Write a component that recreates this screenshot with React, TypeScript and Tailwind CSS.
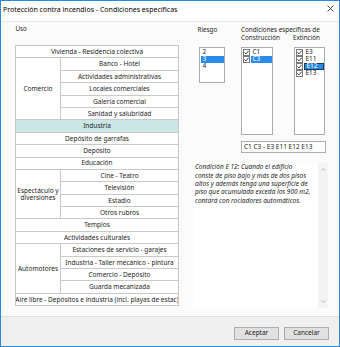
import type { ReactNode } from "react";

type Group = { group: ReactNode; items: string[] };

const usos: (string | Group)[] = [
  "Vivienda - Residencia colectiva",
  {
    group: "Comercio",
    items: [
      "Banco - Hotel",
      "Actividades administrativas",
      "Locales comerciales",
      "Galería comercial",
      "Sanidad y salubridad",
    ],
  },
  "Industria",
  "Depósito de garrafas",
  "Depósito",
  "Educación",
  {
    group: (
      <>
        Espectáculo y
        <br />
        diversiones
      </>
    ),
    items: ["Cine - Teatro", "Televisión", "Estadio", "Otros rubros"],
  },
  "Templos",
  "Actividades culturales",
  {
    group: "Automotores",
    items: [
      "Estaciones de servicio - garajes",
      "Industria - Taller mecánico - pintura",
      "Comercio - Depósito",
      "Guarda mecanizada",
    ],
  },
  "Aire libre - Depósitos e industria (incl. playas de estac)",
];

const rowSpan: Record<number, string> = { 4: "row-span-4", 5: "row-span-5" };

const cell =
  "flex items-center justify-center overflow-hidden whitespace-nowrap border-r border-b border-[#c9c9c9] pt-[1px] leading-none";

function UsoTable() {
  return (
    <div className="grid w-[164px] auto-rows-[12.4px] grid-cols-[45px_118px] border-t border-l border-[#c9c9c9] bg-white text-[6.5px] text-[#1e1e1e]">
      {usos.map((u, i) =>
        typeof u === "string" ? (
          <div
            key={i}
            className={`${cell} col-span-2 ${u === "Industria" ? "bg-[#cbe6e7]" : ""}`}
          >
            {u}
          </div>
        ) : (
          [
            <div
              key={`g${i}`}
              className={`${cell} ${rowSpan[u.items.length]} text-center leading-[8px] whitespace-normal`}
            >
              <span>{u.group}</span>
            </div>,
            ...u.items.map((it) => (
              <div key={it} className={cell}>
                {it}
              </div>
            )),
          ]
        ),
      )}
    </div>
  );
}

function Check() {
  return (
    <svg width="7" height="7" viewBox="0 0 7 7" className="shrink-0">
      <rect x="0.5" y="0.5" width="6" height="6" fill="#fff" stroke="#7a7a7a" />
      <path d="M1.4 3.4 L2.9 4.9 L5.6 1.8" fill="none" stroke="#222" strokeWidth="0.9" />
    </svg>
  );
}

function CheckItem({ label, sel, focus }: { label: string; sel?: boolean; focus?: boolean }) {
  return (
    <div className="flex h-[7px] items-center pl-[1px]">
      <Check />
      <span
        className={`ml-[1px] flex h-[7px] flex-1 items-center pl-[1.5px] leading-none ${
          sel ? "bg-[#2a8ce8] text-white" : ""
        } ${focus ? "border border-[#1d3a5c]" : ""}`}
      >
        {label}
      </span>
    </div>
  );
}

function Description() {
  return (
    <div className="mt-[10px] flex h-[145px] w-[135px] bg-white">
      <div className="flex-1 px-[2px] pt-[0.5px] text-[6.5px] leading-[8.4px] italic text-[#1e1e1e]">
        <div>Condición E 12: Cuando el edificio</div>
        <div>conste de piso bajo y más de dos pisos</div>
        <div>altos y además tenga una superficie de</div>
        <div>piso que acumulada exceda los 900 m2,</div>
        <div>contará con rociadores automáticos.</div>
      </div>
      <div className="flex w-[10px] flex-col items-center justify-between bg-[#f4f4f4] py-[5px]">
        <svg width="5" height="3" viewBox="0 0 5 3">
          <path d="M0.5 2.6 L2.5 0.6 L4.5 2.6" fill="none" stroke="#a6a6a6" strokeWidth="0.8" />
        </svg>
        <svg width="5" height="3" viewBox="0 0 5 3">
          <path d="M0.5 0.4 L2.5 2.4 L4.5 0.4" fill="none" stroke="#a6a6a6" strokeWidth="0.8" />
        </svg>
      </div>
    </div>
  );
}

function Button({ children }: { children: ReactNode }) {
  return (
    <button className="flex h-[13px] w-[45px] items-center justify-center border border-[#adadad] bg-[#e1e1e1] text-[6.5px] leading-none text-[#1e1e1e]">
      {children}
    </button>
  );
}

export default function App() {
  return (
    <div className="flex h-[347px] w-[340px] flex-col border border-[#2b88d8] bg-white font-['Noto_Sans',sans-serif] text-[#1e1e1e]">
      {/* title bar */}
      <div className="flex h-[21px] shrink-0 items-start justify-between border-b border-[#e6e6e6] bg-white pl-[2px] pt-[3px]">
        <span className="text-[7px] leading-[11px] text-black">
          Protección contra incendios - Condiciones específicas
        </span>
        <svg width="7" height="7" viewBox="0 0 7 7" className="mt-[1px] mr-[5px]">
          <path d="M0.5 0.5 L6.5 6.5 M6.5 0.5 L0.5 6.5" stroke="#222" strokeWidth="0.8" />
        </svg>
      </div>

      {/* body */}
      <div className="flex h-[294px] shrink-0 bg-[#fbfbfb] pl-[14px]">
        <div className="flex flex-col pt-[3px]">
          <span className="pl-[0.5px] text-[6.3px] leading-[8px]">Uso</span>
          <div className="mt-[12px]">
            <UsoTable />
          </div>
        </div>

        <div className="ml-[14px] flex w-[135px] flex-col pt-[3.75px] text-[6.3px]">
          <div className="flex items-start">
            <div className="flex w-[48px] flex-col">
              <span className="pl-[4.5px] leading-[8.5px]">Riesgo</span>
              <div className="mt-[12.5px] ml-[6px] flex h-[36px] w-[26px] flex-col border border-[#adadad] bg-white p-[0.5px] pt-[1px] text-[6.5px]">
                <div className="flex h-[7px] items-center pl-[2px] leading-none">2</div>
                <div className="flex h-[7px] items-center bg-[#2a8ce8] pl-[2px] leading-none text-white">3</div>
                <div className="flex h-[7px] items-center pl-[2px] leading-none">4</div>
              </div>
            </div>
            <div className="flex flex-col">
              <span className="leading-[8.5px]">Condiciones específicas de</span>
              <div className="flex">
                <div className="flex w-[52px] flex-col">
                  <span className="leading-[8.5px]">Construcción</span>
                  <div className="mt-[4px] flex h-[88px] w-[32px] flex-col border border-[#adadad] bg-white pt-[1px] text-[6.5px]">
                    <CheckItem label="C1" />
                    <CheckItem label="C3" sel />
                  </div>
                </div>
                <div className="flex flex-col">
                  <span className="leading-[8.5px]">Extinción</span>
                  <div className="mt-[4px] ml-[1px] flex h-[88px] w-[31px] flex-col border border-[#adadad] bg-white pt-[1px] text-[6.5px]">
                    <CheckItem label="E3" />
                    <CheckItem label="E11" />
                    <CheckItem label="E12" sel focus />
                    <CheckItem label="E13" />
                  </div>
                </div>
              </div>
            </div>
          </div>

          <div className="mt-[6px] ml-[48px] flex h-[12px] w-[85px] items-center border border-[#adadad] bg-white pl-[2px] text-[6.5px] leading-none">
            C1 C3 - E3 E11 E12 E13
          </div>

          <Description />
        </div>
      </div>

      {/* footer */}
      <div className="flex flex-1 justify-end gap-[5px] border-t border-[#dfdfdf] bg-[#f0f0f0] pt-[10px] pr-[10px]">
        <Button>Aceptar</Button>
        <Button>Cancelar</Button>
      </div>
    </div>
  );
}
